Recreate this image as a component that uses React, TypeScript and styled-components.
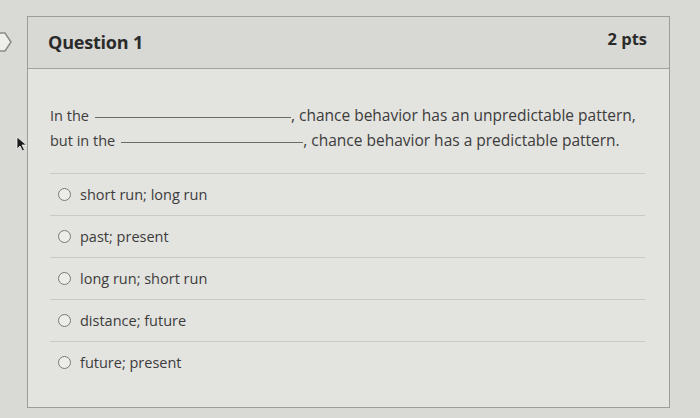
import React from 'react';
import styled, {createGlobalStyle} from 'styled-components';

const GlobalStyle = createGlobalStyle`
  html, body {
    margin: 0;
    padding: 0;
    background: #d9d9d5;
    font-family: "Open Sans", Lato, sans-serif;
  }
`;

const Page = styled.div`
  position: relative;
  width: 700px;
  height: 418px;
  overflow: hidden;
  padding: 16px 30px 10px 27px;
  box-sizing: border-box;
`;

const Card = styled.div`
  border: 1px solid #9c9c98;
  background: #e3e3df;
  height: 392px;
  box-sizing: border-box;
`;

const Header = styled.div`
  display: flex;
  justify-content: space-between;
  align-items: center;
  height: 52px;
  padding: 0 22px 0 20px;
  background: #d8d8d4;
  border-bottom: 1px solid #a2a29e;
  box-sizing: border-box;
`;

const Title = styled.h2`
  margin: 0 0 2px;
  font-size: 18px;
  font-weight: 700;
  color: #2b2b2b;
  letter-spacing: -0.2px;
`;

const Points = styled.span`
  margin-top: -8px;
  font-size: 16.5px;
  font-weight: 700;
  color: #2b2b2b;
`;

const Body = styled.div`
  padding: 34px 24px 0 22px;
`;

const Prompt = styled.div`
  font-size: 15.5px;
  line-height: 25px;
  color: #3c3c3c;
  padding-bottom: 20px;
  border-bottom: 1px solid #c9c9c5;
`;

const Line = styled.div`
  display: flex;
  align-items: baseline;
  white-space: nowrap;
`;

const Lead = styled.span`
  font-size: 14.5px;
`;

const Blank = styled.span<{ $w: number }>`
  display: inline-block;
  width: ${p => p.$w}px;
  margin-left: 6px;
  border-bottom: 1px solid #6a6a66;
  transform: translateY(-3px);
`;

const Answers = styled.ul`
  list-style: none;
  margin: 0;
  padding: 0;
`;

const Answer = styled.li`
  display: flex;
  align-items: center;
  gap: 9px;
  height: 41px;
  padding-left: 8px;
  border-bottom: 1px solid #c9c9c5;
  font-size: 14.5px;
  color: #3c3c3c;

  &:last-child {
    border-bottom: none;
  }
`;

const Radio = styled.span`
  width: 13px;
  height: 13px;
  border: 1.5px solid #7a7a76;
  border-radius: 50%;
  box-sizing: border-box;
  background: #ecece8;
`;

const SideTab = styled.svg`
  position: absolute;
  left: -4px;
  top: 31px;
`;

const Cursor = styled.svg`
  position: absolute;
  left: 16px;
  top: 136px;
`;

const options = [
  'short run; long run',
  'past; present',
  'long run; short run',
  'distance; future',
  'future; present',
];

export default function App() {
  return (
    <>
      <GlobalStyle/>
      <Page>
        <SideTab width="18" height="22" viewBox="0 0 18 22">
          <path d="M0 2 H9 L15 11 L9 20 H0" fill="#eeeeea" stroke="#8a8a86" strokeWidth="1.5"/>
        </SideTab>
        <Cursor width="12" height="16" viewBox="0 0 12 16">
          <path d="M1 1 L1 13 L4 10 L6.5 15 L8.5 14 L6 9 L10.5 9 Z" fill="#1b1b1b" stroke="#f2f2f2" strokeWidth="0.8"/>
        </Cursor>
        <Card>
          <Header>
            <Title>Question 1</Title>
            <Points>2 pts</Points>
          </Header>
          <Body>
            <Prompt>
              <Line>
                <Lead>In the</Lead><Blank $w={196}/>, chance behavior has an unpredictable pattern,
              </Line>
              <Line>
                <Lead>but in the</Lead><Blank $w={182}/>, chance behavior has a predictable pattern.
              </Line>
            </Prompt>
            <Answers>
              {options.map(o => (
                <Answer key={o}>
                  <Radio/>
                  {o}
                </Answer>
              ))}
            </Answers>
          </Body>
        </Card>
      </Page>
    </>
  );
}
